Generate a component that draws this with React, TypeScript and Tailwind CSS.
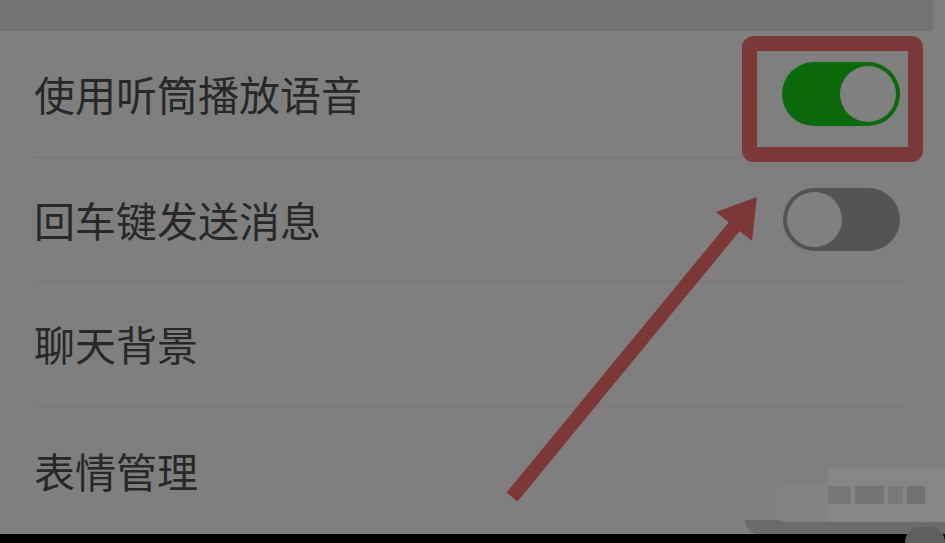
import { ReactNode } from "react";

type Row = { label: string; h: string; toggle?: "on" | "off" };

const rows: Row[] = [
  { label: "使用听筒播放语音", h: "h-[127px]", toggle: "on" },
  { label: "回车键发送消息", h: "h-[124px]", toggle: "off" },
  { label: "聊天背景", h: "h-[125px]" },
  { label: "表情管理", h: "h-[127px]" },
];

function Toggle({ on }: { on: boolean }) {
  if (on) {
    return (
      <div className="mr-[4px] flex h-[64px] w-[118px] items-center justify-end rounded-full bg-[#0b6a0b] p-[4px]">
        <div className="h-[56px] w-[56px] rounded-full bg-[#808080]" />
      </div>
    );
  }
  return (
    <div className="mr-[4px] flex h-[63px] w-[117px] items-center justify-start rounded-full bg-[#545454] p-[4px]">
      <div className="h-[55px] w-[55px] rounded-full bg-[#808080]" />
    </div>
  );
}

function SettingRow({ row, last }: { row: Row; last: boolean }): ReactNode {
  return (
    <li
      className={`ml-[34px] mr-[41px] flex items-center justify-between pb-[1px] ${row.h} ${
        last ? "" : "border-b border-[#767676]"
      }`}
    >
      <span className="text-[41px] leading-none text-[#282828]">{row.label}</span>
      {row.toggle && <Toggle on={row.toggle === "on"} />}
    </li>
  );
}

export default function App() {
  return (
    <div className="relative h-[543px] w-[945px] overflow-hidden bg-[#7f7f7f] font-['Noto_Sans_CJK_SC','Noto_Sans',sans-serif]">
      <div className="h-[31px] w-[933px] bg-[#737373]" />

      <ul>
        {rows.map((row, i) => (
          <SettingRow key={row.label} row={row} last={i === rows.length - 1} />
        ))}
      </ul>

      <div className="h-[9px] bg-black" />

      {/* blurred watermark, bottom right */}
      <div className="absolute left-[745px] top-[520px] h-[14px] w-[200px] rounded-bl-[40px] bg-[#6b6b6b]" />
      <div className="absolute left-[775px] top-[485px] h-[37px] w-[60px] rounded-l-[12px] bg-[#838383]" />
      <div className="absolute left-[828px] top-[468px] h-[54px] w-[117px] bg-[#868686]" />
      <div className="absolute left-[828px] top-[486px] flex h-[18px] w-[97px] gap-[4px]">
        <div className="w-[24px] bg-[#777777]" />
        <div className="w-[30px] bg-[#737373]" />
        <div className="w-[16px] bg-[#797979]" />
        <div className="w-[19px] bg-[#727272]" />
      </div>
      <div className="absolute left-[905px] top-[527px] h-[30px] w-[40px] rounded-full bg-[#5e5e5e]" />

      {/* red annotation */}
      <svg
        className="pointer-events-none absolute inset-0"
        width={945}
        height={543}
        viewBox="0 0 945 543"
      >
        <rect
          x={749.5}
          y={43.5}
          width={166}
          height={111}
          rx={4}
          fill="none"
          stroke="#7b3939"
          strokeWidth={15}
        />
        <line x1={512} y1={497} x2={738} y2={222} stroke="#7d3737" strokeWidth={14} />
        <polygon points="757,197 716,212 752,241" fill="#7d3737" />
      </svg>
    </div>
  );
}
